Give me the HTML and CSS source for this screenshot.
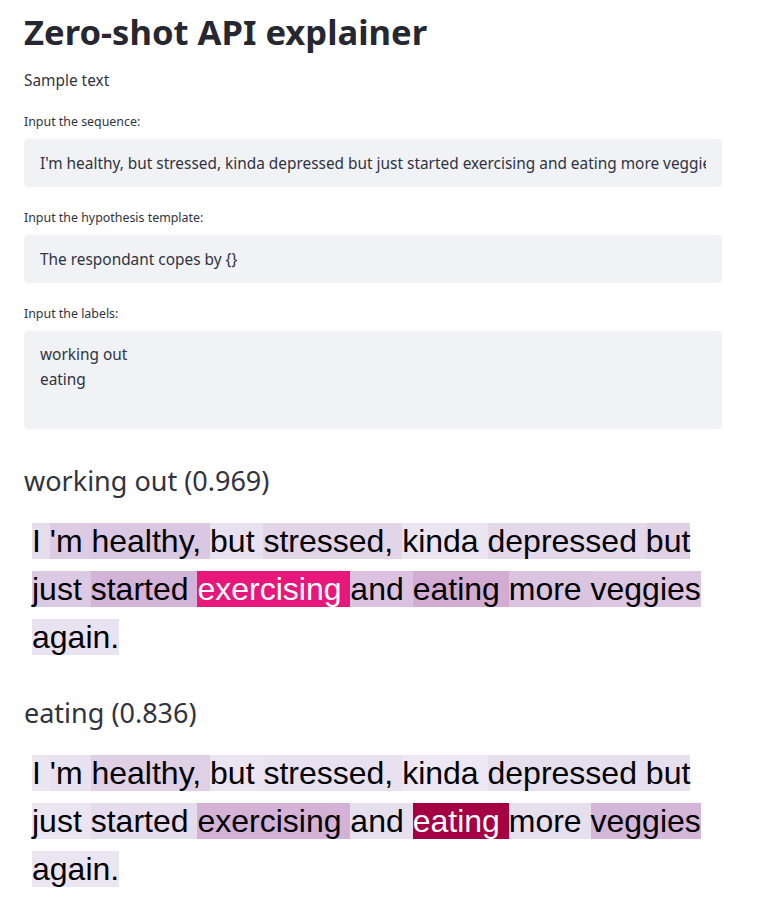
FILE: index.html
```html
<!DOCTYPE html>
<html lang="en">
<head>
<meta charset="utf-8">
<title>Zero-shot API explainer</title>
<link rel="stylesheet" href="styles.css">
</head>
<body>
<main class="main">
  <h1 class="title">Zero-shot API explainer</h1>
  <p class="sample">Sample text</p>

  <div class="widget">
    <label class="label" for="seq">Input the sequence:</label>
    <input class="field" id="seq" type="text" value="I'm healthy, but stressed, kinda depressed but just started exercising and eating more veggies again.">
  </div>

  <div class="widget">
    <label class="label" for="hyp">Input the hypothesis template:</label>
    <input class="field" id="hyp" type="text" value="The respondant copes by {}">
  </div>

  <div class="widget">
    <label class="label" for="labels">Input the labels:</label>
    <textarea class="field area" id="labels">working out
eating</textarea>
  </div>

  <h3 class="result-title">working out (0.969)</h3>
  <div class="explain"><span class="tok" style="background:#e5dcec">I </span><span class="tok" style="background:#dccbe3">'m </span><span class="tok" style="background:#dac8e2">healthy, </span><span class="tok" style="background:#e8e2f0">but </span><span class="tok" style="background:#e2d5e8">stressed, </span><span class="tok" style="background:#ebe5f2">kinda </span><span class="tok" style="background:#e4d9eb">depressed </span><span class="tok" style="background:#dfd0e6">but </span><span class="tok" style="background:#dcc9e3">just </span><span class="tok" style="background:#d3b3d7">started </span><span class="tok hot" style="background:#e7177b">exercising </span><span class="tok" style="background:#dac2e0">and </span><span class="tok" style="background:#d2acd3">eating </span><span class="tok" style="background:#dac4e0">more </span><span class="tok" style="background:#dcc6e1">veggies </span><span class="tok" style="background:#e9e3f1">again.</span></div>

  <h3 class="result-title">eating (0.836)</h3>
  <div class="explain"><span class="tok" style="background:#ebe5f2">I </span><span class="tok" style="background:#e8e1ef">'m </span><span class="tok" style="background:#dfd0e6">healthy, </span><span class="tok" style="background:#ebe5f2">but </span><span class="tok" style="background:#e8e1ef">stressed, </span><span class="tok" style="background:#ede8f3">kinda </span><span class="tok" style="background:#e6dfee">depressed </span><span class="tok" style="background:#e6dfee">but </span><span class="tok" style="background:#ebe5f2">just </span><span class="tok" style="background:#e5dced">started </span><span class="tok" style="background:#d3b2d6">exercising </span><span class="tok" style="background:#e6dfee">and </span><span class="tok hot" style="background:#a50043">eating </span><span class="tok" style="background:#e6dfee">more </span><span class="tok" style="background:#d4b6d9">veggies </span><span class="tok" style="background:#ebe5f2">again.</span></div>
</main>
</body>
</html>
```

FILE: styles.css
```css
html, body {
  margin: 0;
  padding: 0;
  background: #ffffff;
}

body {
  font-family: "Noto Sans", "Open Sans", sans-serif;
  color: #31333f;
}

.main {
  width: 698px;
  padding: 11px 0 0 24px;
  display: flex;
  flex-direction: column;
  gap: 16px;
}

.title {
  margin: 0;
  font-size: 34.6px;
  line-height: 42px;
  font-weight: 700;
  color: #262730;
}

.sample {
  margin: 0;
  padding-top: 1px;
  font-size: 15.4px;
  line-height: 21px;
}

.widget {
  display: flex;
  flex-direction: column;
  gap: 4px;
}

.label {
  box-sizing: border-box;
  padding-top: 2px;
  font-size: 12.4px;
  line-height: 26px;
  height: 28px;
}

.field {
  box-sizing: border-box;
  width: 698px;
  height: 48px;
  margin: 0;
  padding: 0 15px;
  border: 1px solid #f0f2f6;
  border-radius: 4px;
  background: #f0f2f6;
  font-family: "Noto Sans", "Open Sans", sans-serif;
  font-size: 15.4px;
  color: #31333f;
  outline: none;
}

.area {
  height: 98px;
  padding: 10px 15px;
  line-height: 25px;
  resize: none;
  overflow: hidden;
}

.result-title {
  margin: 0;
  padding-top: 16px;
  font-size: 27px;
  line-height: 40px;
  font-weight: 400;
  color: #31333f;
}

.explain {
  padding-left: 8px;
  font-family: "Liberation Sans", Arial, sans-serif;
  font-size: 32px;
  line-height: 48px;
  color: #000000;
}

.tok.hot {
  color: #ffffff;
}
```
